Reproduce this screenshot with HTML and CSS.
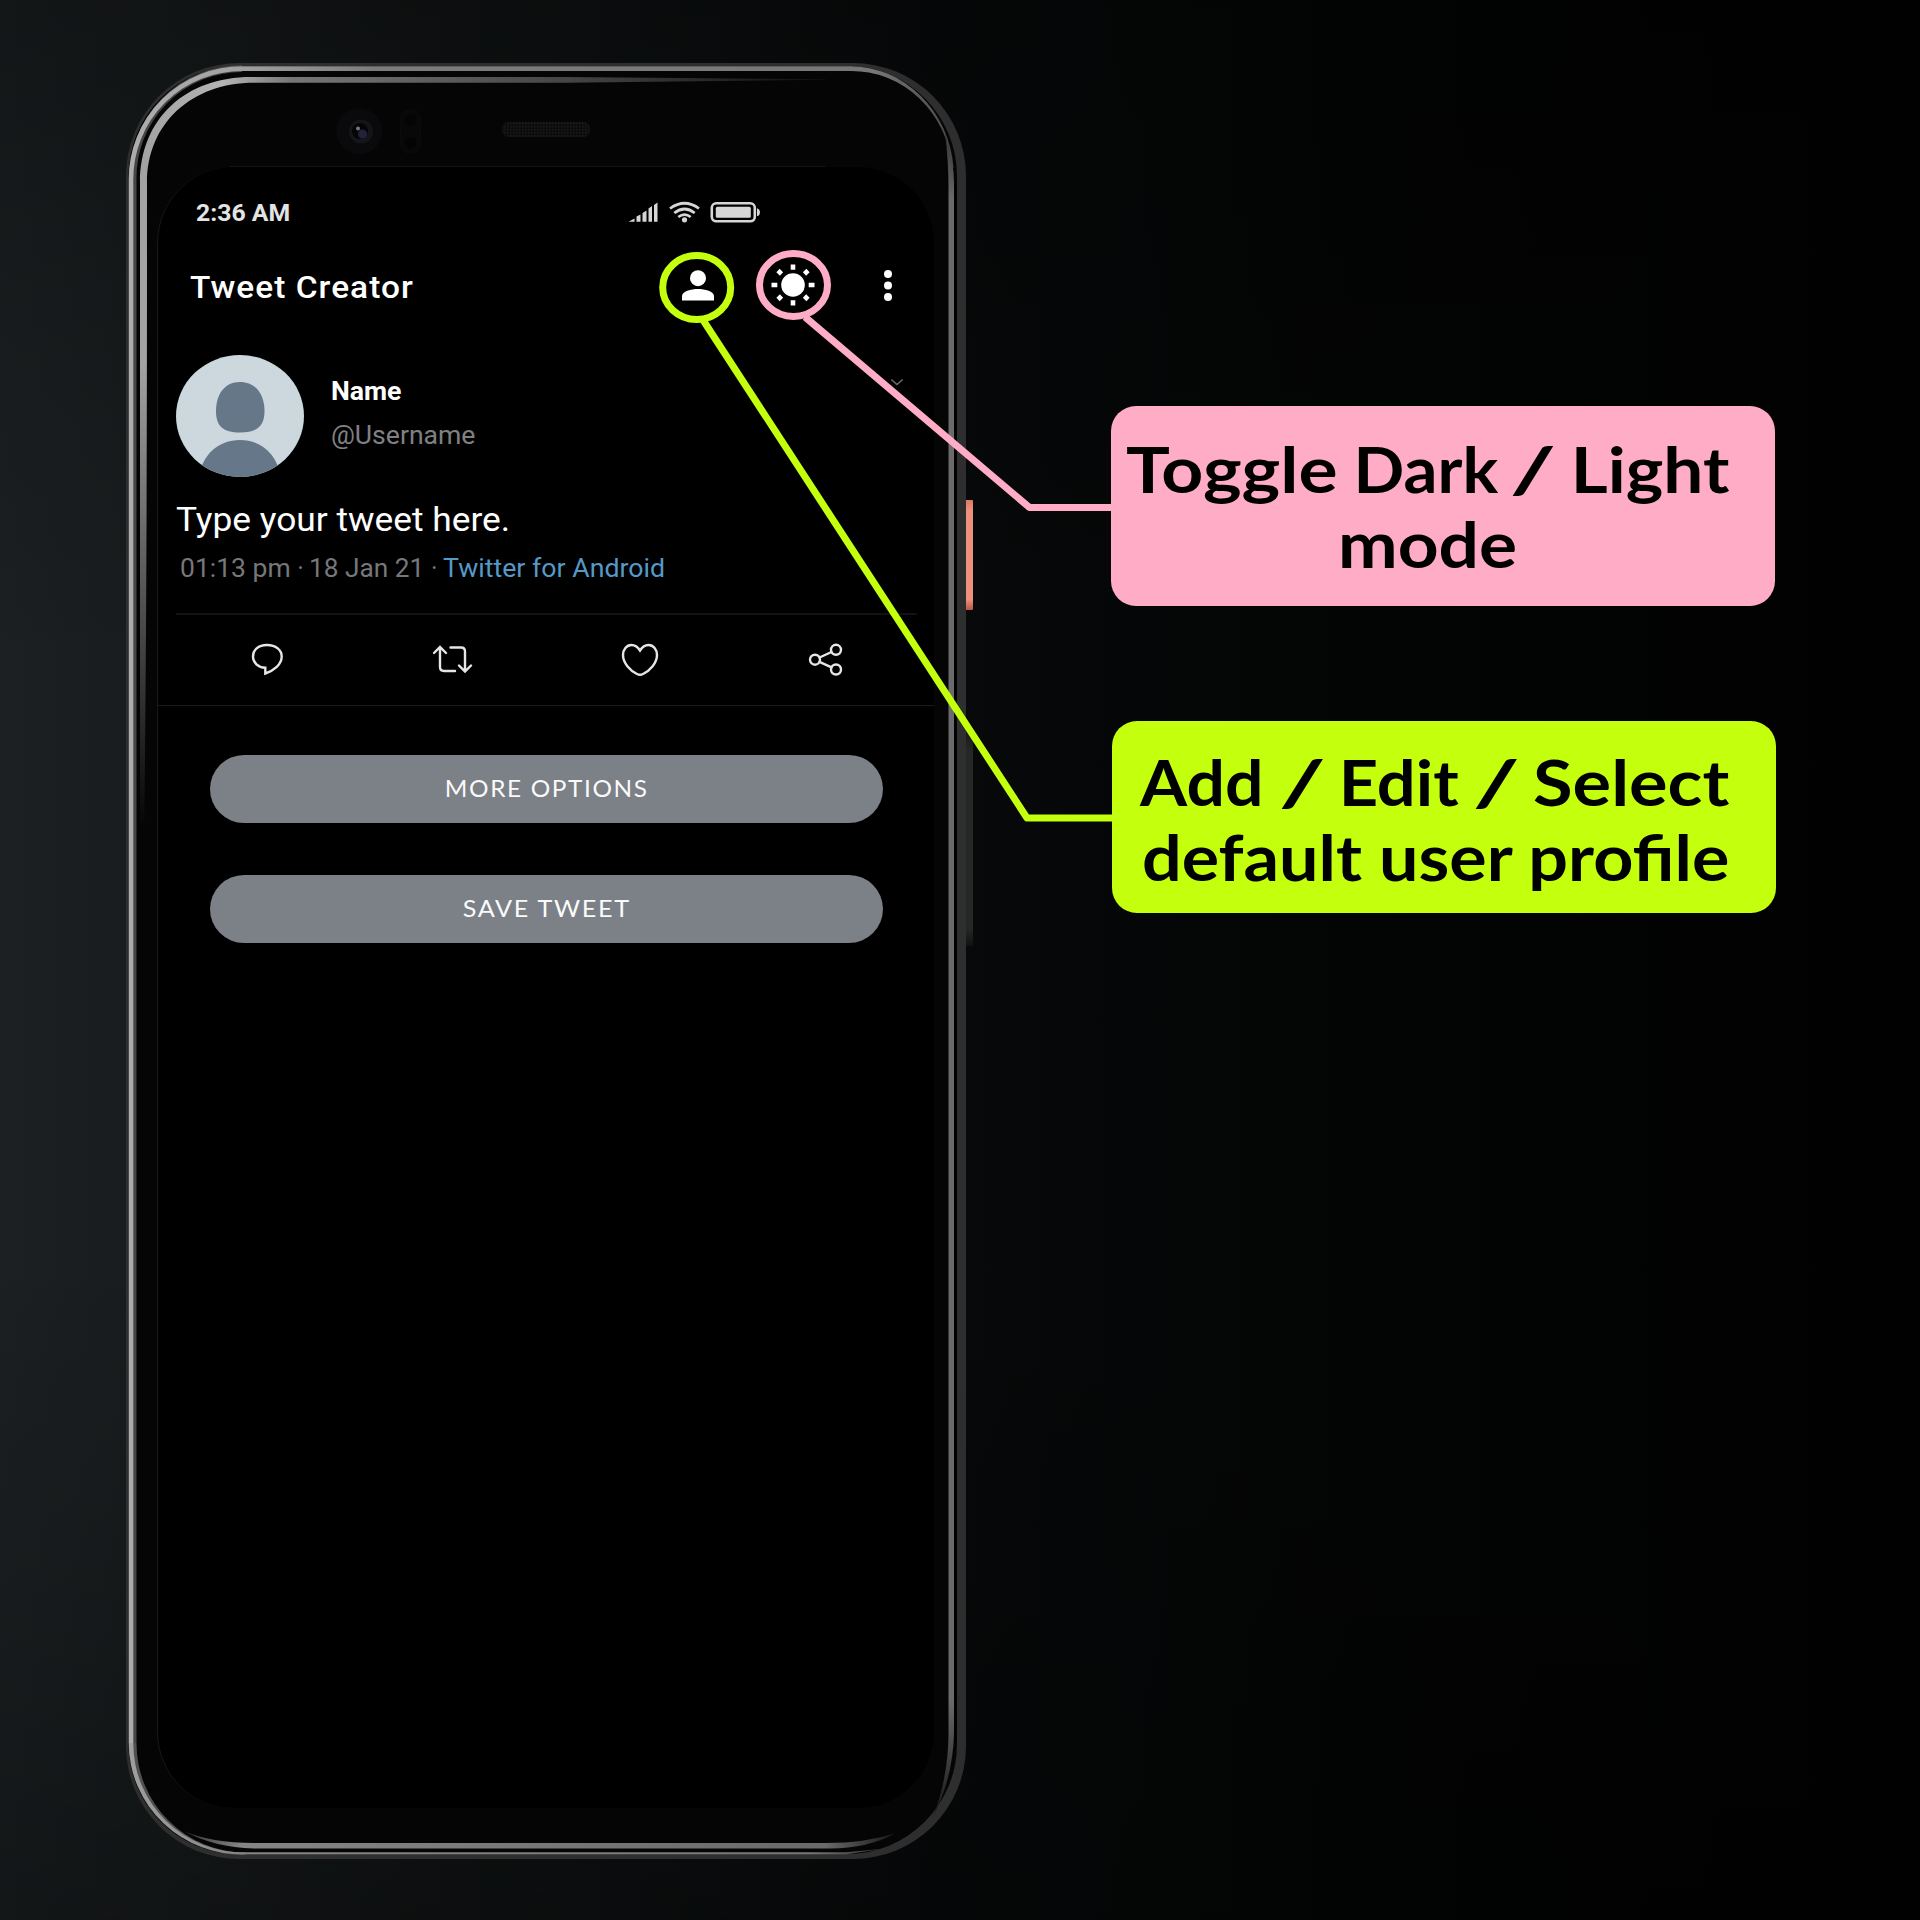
FILE: index.html
```html
<!DOCTYPE html>
<html lang="en">
<head>
<meta charset="utf-8">
<title>Tweet Creator</title>
<link rel="stylesheet" href="styles.css">
</head>
<body>
<main class="stage">
  <section class="phone">
    <svg class="frame" width="860" height="1800" viewBox="0 0 860 1800" aria-hidden="true">
      <defs>
        <linearGradient id="rim" x1="0" y1="0" x2="830" y2="0" gradientUnits="userSpaceOnUse">
          <stop offset="0" stop-color="#adadad"/><stop offset=".12" stop-color="#a4a4a4"/><stop offset=".3" stop-color="#7c7c7c"/><stop offset=".9" stop-color="#777"/><stop offset="1" stop-color="#454545"/>
        </linearGradient>
        <linearGradient id="gleam" x1="0" y1="0" x2="1" y2="0">
          <stop offset="0" stop-color="#a2a2a2"/><stop offset=".12" stop-color="#b4b4b4"/><stop offset=".22" stop-color="#777"/><stop offset=".6" stop-color="#484848"/><stop offset="1" stop-color="#101010"/>
        </linearGradient>
        <linearGradient id="fade" x1="0" y1="0" x2="0" y2="1"><stop offset="0" stop-color="#050505" stop-opacity="0"/><stop offset=".95" stop-color="#050505"/></linearGradient>
        <linearGradient id="power" x1="0" y1="0" x2="0" y2="1">
          <stop offset="0" stop-color="#dd7a63"/><stop offset=".1" stop-color="#ee917c"/><stop offset=".9" stop-color="#ee917c"/><stop offset="1" stop-color="#b9574a"/>
        </linearGradient>
        <linearGradient id="volume" x1="0" y1="0" x2="0" y2="1">
          <stop offset="0" stop-color="#141515"/><stop offset=".1" stop-color="#252626"/><stop offset=".92" stop-color="#252626"/><stop offset="1" stop-color="#111"/>
        </linearGradient>
        <linearGradient id="base" x1="0" y1="0" x2="1" y2="0">
          <stop offset="0" stop-color="#333"/><stop offset=".08" stop-color="#858585"/><stop offset=".9" stop-color="#6a6a6a"/><stop offset="1" stop-color="#151515"/>
        </linearGradient>
        <linearGradient id="lip" x1="0" y1="0" x2="760" y2="0" gradientUnits="userSpaceOnUse">
          <stop offset="0" stop-color="#a0a0a0"/><stop offset=".15" stop-color="#858585"/><stop offset=".9" stop-color="#777"/><stop offset="1" stop-color="#2e2e2e"/>
        </linearGradient>
        <linearGradient id="side" x1="0" y1="0" x2="0" y2="1">
          <stop offset="0" stop-color="#333"/><stop offset=".04" stop-color="#6b6b6d"/><stop offset=".93" stop-color="#6b6b6d"/><stop offset="1" stop-color="#151515"/>
        </linearGradient>
        <pattern id="mesh" width="3" height="3" patternUnits="userSpaceOnUse"><rect width="3" height="3" fill="#0c0c0c"/><rect width="1.5" height="1.5" fill="#1b1b1b"/></pattern>
      </defs>
      <rect x="838" y="437" width="9" height="110" rx="1" fill="url(#power)"/>
      <rect x="838" y="665" width="9" height="218" rx="1" fill="url(#volume)"/>
      <rect width="840" height="1796" rx="113" fill="#2e2e2e"/>
      <rect x="2.500" y="3" width="828.500" height="1788" rx="110" fill="#050505"/>
      <path d="M7 1680V116A109 109 0 0 1 116 5.500" fill="none" stroke="#464646" stroke-width="7"/>
      <path d="M3.500 1680A112 112 0 0 0 120 1791.500V1789.500A109 109 0 0 1 10.500 1680Z" fill="#505050"/>
      <path d="M724 3.200A104 110 0 0 1 827.500 105L826 105A101 105 0 0 0 724 8Z" fill="url(#rim)"/>
      <path d="M5 1680V116A111 110.500 0 0 1 116 5.600H725" fill="none" stroke="url(#rim)" stroke-width="4.600"/>
      <path d="M2.700 1680A113 111.500 0 0 0 120 1791.300H720L760 1785.500L720 1789.300H120A110 109 0 0 1 7.300 1680Z" fill="url(#lip)"/>
      <path d="M14 780V120C14 55 60 14 125 14H440L700 16.200V16.800L440 19.800H128C66 19.800 21 60 21 120C21 300 21 560 18 780Z" fill="url(#gleam)"/>
      <rect x="12" y="300" width="10" height="490" fill="url(#fade)"/>
      <path d="M58 1768Q85 1780 128 1780H700Q740 1780 770 1770Q742 1785.500 704 1785.500H128Q88 1784.500 58 1768Z" fill="url(#base)"/>
      <path d="M819 70Q828 98 828 120V1670Q827 1715 807 1754Q822 1715 822.500 1672V124Q822.500 98 819 70Z" fill="url(#side)"/>
      <path d="M829.500 120V1680" stroke="#000" stroke-width="2"/>
      <circle cx="233.300" cy="68.300" r="23" fill="#0a0a0c"/>
      <circle cx="235" cy="68.500" r="12" fill="#151519"/>
      <circle cx="234" cy="68" r="8" fill="#050507"/>
      <circle cx="236.500" cy="71" r="4.500" fill="#22223a"/>
      <circle cx="232" cy="65.500" r="2" fill="#77777d"/>
      <rect x="274.500" y="47" width="20" height="43" rx="9" fill="#080808" stroke="#0b0b0b"/>
      <circle cx="284.500" cy="57" r="6" fill="#040404"/><circle cx="284.500" cy="80" r="6" fill="#040404"/>
      <rect x="376.500" y="59.500" width="87" height="14" rx="6" fill="url(#mesh)" stroke="#141414"/>
      <path d="M104 103.500H700" stroke="#131313"/>
    </svg>

    <div class="screen">
      <header class="statusbar">
        <span class="clock wide">2:36 AM</span>
        <svg class="status-icons" width="132" height="24" viewBox="0 0 132 24" fill="#d6d6d6">
          <path d="M.5 21.800L6.500 18.500V21.800ZM8.500 21.800V16.500L12.500 14.500V21.800ZM14.500 21.800V13L18.500 10.500V21.800ZM20.500 21.800V8.500L24 6V21.800ZM26 21.800V5L29.500 2.500V21.800Z"/>
          <g fill="none" stroke="#d6d6d6" stroke-width="2.700"><path d="M42 8.500Q56.500 -2 71 8.500M46.300 13Q56.500 5 66.700 13M50.300 17Q56.500 12.200 62.700 17"/></g>
          <circle cx="56.500" cy="19.800" r="2.600"/>
          <rect x="83.800" y="3.300" width="43" height="18" rx="4.500" fill="none" stroke="#d6d6d6" stroke-width="2.600"/>
          <rect x="87.800" y="6.800" width="35" height="11" rx="1.500"/><path d="M129 8.500H129.800Q132 9.500 132 12.200T129.800 16H129Z"/>
        </svg>
      </header>

      <div class="appbar">
        <h1 class="title wide">Tweet Creator</h1>
        <svg class="icon-user" width="32" height="31" viewBox="0 0 32 31" fill="#fff"><circle cx="16" cy="8.200" r="8"/><path d="M0 30.500V26C0 21.500 9 19 16 19S32 21.500 32 26V30.500Z"/></svg>
        <svg class="icon-sun" width="44" height="42" viewBox="-22 -21 44 42" fill="#fff"><circle r="11.800"/><g stroke="#fff" stroke-width="4.600"><path d="M0-20.500V-15.200M0 20.500V15.200M-21.500 0H-15.700M21.500 0H15.700M-15-14.500L-11.500-11M15-14.500L11.500-11M-15 14.500L-11.500 11M15 14.500L11.500 11"/></g></svg>
        <svg class="icon-more" width="8" height="31" viewBox="0 0 8 31" fill="#fff"><circle cx="4" cy="4" r="4"/><circle cx="4" cy="15.500" r="4"/><circle cx="4" cy="27" r="4"/></svg>
      </div>

      <article class="tweet">
        <div class="profile">
          <svg class="avatar" width="128" height="122" viewBox="0 0 128 122">
            <clipPath id="face"><ellipse cx="64" cy="61" rx="64" ry="61"/></clipPath>
            <g clip-path="url(#face)"><rect width="128" height="122" fill="#ccd7de"/>
            <path d="M64 27C80 27 88.500 40 88.500 56C88.500 71 81 77.500 64 77.500S40 71 40 56C40 40 48 27 64 27Z" fill="#657788"/>
            <path d="M23 122C26 100 42 85 64 85S101 100 105 122Z" fill="#657788"/></g>
          </svg>
          <div class="who"><div><b class="name wide">Name</b></div><div><span class="handle wide">@Username</span></div></div>
          <svg class="chevron" width="14" height="9" viewBox="0 0 14 9" fill="none" stroke="#6a6a6a" stroke-width="1.600"><path d="M1.300 1.500L7 6.500L12.700 1.500"/></svg>
        </div>
        <p class="body"><span class="text wide">Type your tweet here.</span></p>
        <p class="meta"><span class="time wide">01:13 pm</span><i>·</i><span class="date wide">18 Jan 21</span><i>·</i><a class="source wide">Twitter for Android</a></p>
        <div class="actions">
          <svg width="40" height="36" viewBox="0 0 40 36"><path d="M20 3C11 3 6 8 6 14.500C6 20.500 11 25.500 18.300 25.700V31.500C27 28.500 34.700 22.500 34.700 14.500C34.700 8 29 3 20 3Z"/></svg>
          <svg width="40" height="36" viewBox="0 0 40 36"><path d="M1 11L7 5L13 11M7 5.500V25Q7 29 11 29H22M17.500 5.500H28Q32 5.500 32 9.500V29M26 23.500L32 29.500L38 23.500"/></svg>
          <svg width="40" height="36" viewBox="0 0 40 36"><path d="M20 8.500C17.500 4.500 14.500 3 11.500 3C6.500 3 3 7.500 3 13C3 21 10 28.500 17 32Q20 33.500 23 32C30 28.500 37 21 37 13C37 7.500 33.500 3 28.500 3C25.500 3 22.500 4.500 20 8.500Z"/></svg>
          <svg width="40" height="36" viewBox="0 0 40 36"><circle cx="9" cy="17.700" r="5"/><circle cx="30" cy="7.800" r="5"/><circle cx="30" cy="27.500" r="5"/><path d="M13.500 15.500L25.500 10M13.500 19.800L25.500 25.300"/></svg>
        </div>
      </article>

      <div class="buttons">
        <button class="btn"><span class="more">MORE OPTIONS</span></button>
        <button class="btn"><span class="save">SAVE TWEET</span></button>
      </div>
    </div>
  </section>

  <aside class="callouts">
    <div class="callout pink">
      <div class="line toggle"><span class="w-toggle">Toggle</span> <span class="w-dark">Dark</span> <span class="slash">/</span> <span class="w-light">Light</span></div>
      <span class="mode wide">mode</span>
    </div>
    <div class="callout lime">
      <div class="line add"><span class="w-add">Add</span> <span class="slash">/</span> <span class="w-edit">Edit</span> <span class="slash">/</span> <span class="w-select">Select</span></div>
      <span class="default wide">default user profile</span>
    </div>
  </aside>

  <svg class="pointers" width="1920" height="1920" viewBox="0 0 1920 1920" fill="none" stroke-width="7" stroke-linejoin="round" aria-hidden="true">
    <g stroke="#ffacc6"><ellipse cx="793.500" cy="285" rx="34" ry="31.500"/><path d="M805 317L1029.500 507.500H1112"/></g>
    <g stroke="#c4ff0e"><ellipse cx="696.700" cy="287.500" rx="34" ry="32"/><path d="M703 320L1027 818H1113"/></g>
  </svg>
</main>
</body>
</html>
```
FILE: styles.css
```css
* { box-sizing: border-box; }
body { margin: 0; background: #000; font-family: Roboto, "Liberation Sans", sans-serif; }
.stage {
  position: relative; width: 1920px; height: 1920px; overflow: hidden;
  display: flex; align-items: flex-start; padding: 63px 0 0 126px; gap: 145px;
  background:
    linear-gradient(180deg, rgba(0,0,0,.3) 0, rgba(0,0,0,0) 35%, rgba(0,0,0,0) 65%, rgba(0,0,0,.3) 100%),
    linear-gradient(90deg, #1c2022 0, #121516 22%, #07090a 50%, #030404 70%, #010101 100%);
}
.phone { position: relative; flex: none; width: 840px; height: 1796px; padding: 104px 32px 51px; }
.frame { position: absolute; left: 0; top: 0; }
.screen {
  position: relative; width: 777px; height: 1641px; margin-left: -1px;
  border-left: 1px solid #191919; border-radius: 76px; background: #000; color: #fff;
}
.wide { display: inline-block; transform-origin: 0 50%; }
.statusbar { display: flex; justify-content: space-between; align-items: center; height: 90px; padding: 0 174px 0 38px; }
.clock { padding-top: 1px; font-size: 23.5px; font-weight: 700; color: #e4e4e4; transform: scaleX(1.055); }
.appbar { display: flex; align-items: center; height: 57px; padding: 0 42.5px 0 31.5px; }
.title { margin: 2px auto 0 0; font-size: 32px; line-height: 38px; font-weight: 500; letter-spacing: 1px; transform: scaleX(1.044); }
.icon-sun { margin: -2px 69px 0 56.5px; }
.tweet { padding-top: 41px; border-bottom: 1px solid #1b1b1b; }
.profile { display: flex; align-items: flex-start; height: 140px; padding-left: 18px; }
.who { padding: 15px 0 0 27px; font-size: 25px; line-height: 44px; }
.name { transform: scaleX(1.065); }
.handle { color: #808083; transform: scaleX(1.063); }
.chevron { margin: 23px 30px 0 auto; }
.body, .meta { margin: 0; padding-left: 18px; }
.body { font-size: 34px; line-height: 48px; }
.text { transform: scaleX(1.038); }
.meta { display: flex; padding-left: 22px; font-size: 25px; line-height: 51px; height: 70px; color: #77777a; }
.meta i { width: 18px; text-align: center; font-style: normal; }
.time { margin-right: 7px; transform: scaleX(1.06); }
.date { margin-right: 6px; transform: scaleX(1.05); }
.source { color: #5599c6; transform: scaleX(1.068); }
.actions { display: flex; justify-content: space-between; align-items: center; height: 92px; margin: 0 17px 0 18px; padding: 0 71px; border-top: 2px solid #121212; }
.actions svg { fill: none; stroke: #e6e6e6; stroke-width: 2.4; stroke-linecap: round; }
.buttons { display: flex; flex-direction: column; gap: 52px; padding: 49px 51px 0 51.5px; }
.btn { height: 68px; padding: 0; border: 0; border-radius: 35px; background: #7c8087; color: #fafafa; font: 400 22.5px/66px Lato, sans-serif; letter-spacing: 1.5px; }
.btn span { display: block; }
.more { transform: scaleX(1.083); }
.save { transform: scaleX(1.12); }
.callouts { display: flex; flex-direction: column; gap: 115px; padding-top: 343px; }
.callout { display: flex; flex-direction: column; align-items: flex-start; width: 664px; border-radius: 25px; color: #000; font: 700 62.5px/75px Lato, sans-serif; }
.pink { height: 200px; background: #ffacc6; padding-top: 25px; }
.lime { height: 192px; background: #c4ff0e; margin-left: 1px; padding-top: 23px; }
.line { display: flex; gap: 12px; transform-origin: 0 50%; }
.line span { transform-origin: 0 50%; }
.line .slash { transform-origin: 50% 50%; transform: translateX(-2px) scaleX(1.4); }
.w-toggle { margin-right: 5.5px; transform: scaleX(1.03); }
.w-dark { transform: translateX(2px) scaleX(.94); }
.w-light { margin-left: 4.500px; }
.w-add { margin-right: 2px; transform: scaleX(.94); }
.w-edit { margin: 0 3px 0 3px; transform: scaleX(.95); }
.w-select { margin-left: 3px; }
.toggle { margin-left: 15px; transform: scaleX(1.138); }
.mode { margin-left: 227px; transform: scaleX(1.14); }
.add { margin-left: 28px; transform: scaleX(1.155); }
.default { margin-left: 30px; transform: scaleX(1.12); }
.pointers { position: absolute; left: 0; top: 0; }
```
